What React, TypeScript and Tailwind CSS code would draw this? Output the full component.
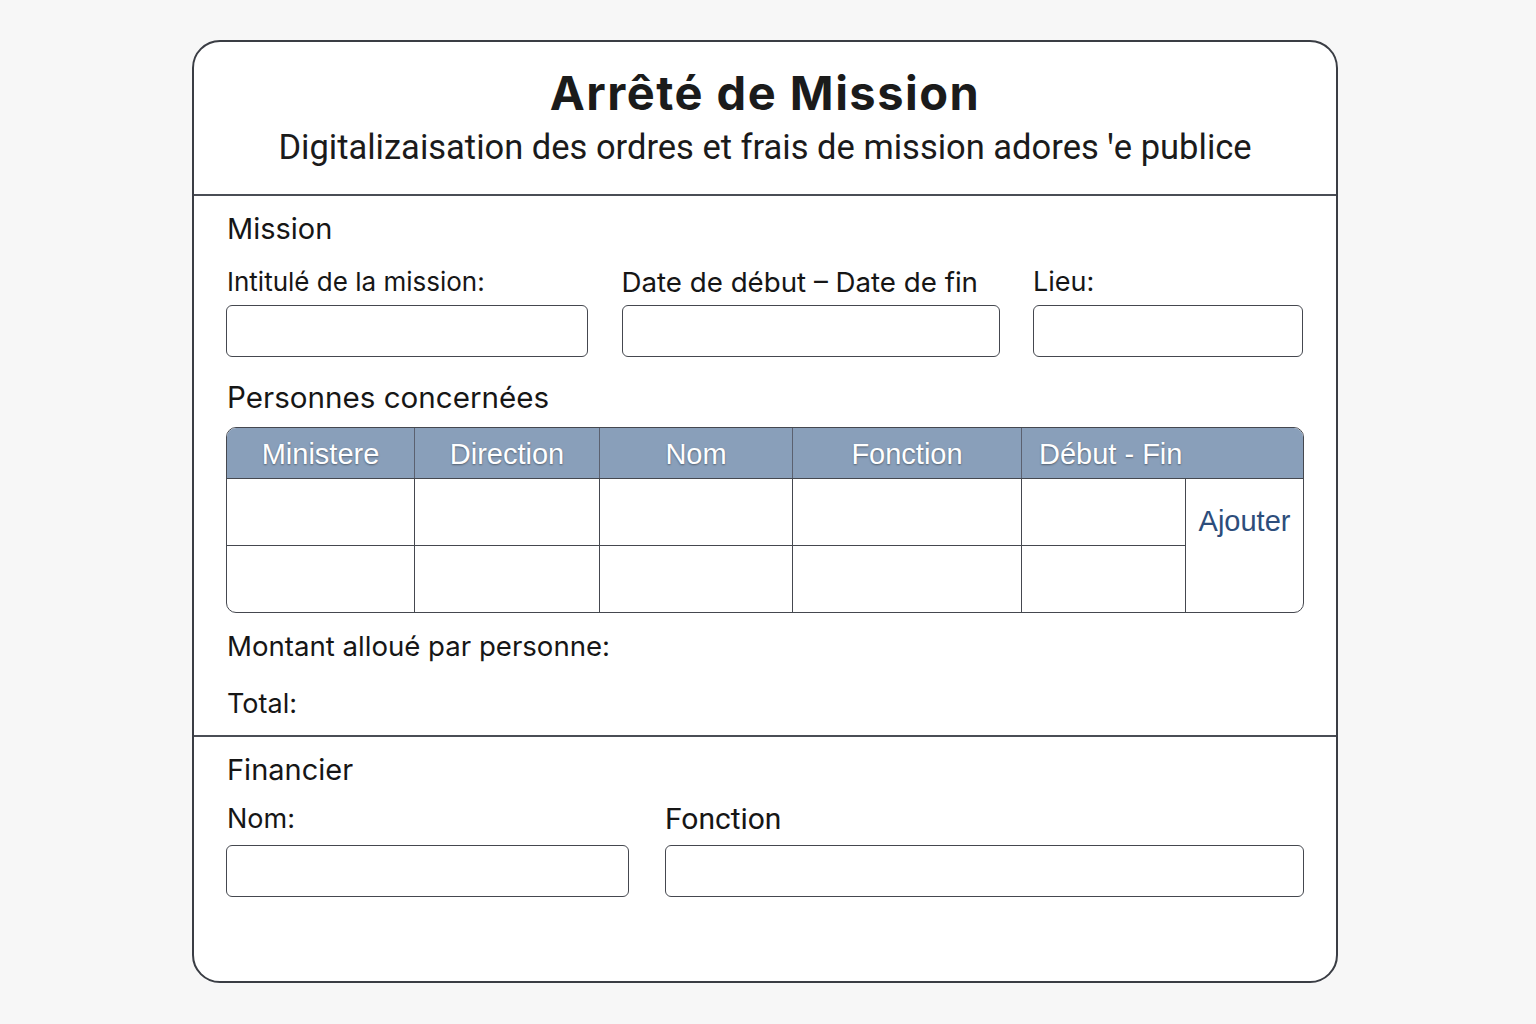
import React from "react";

const inter = "font-['Inter','Liberation_Sans',sans-serif]";

function Field({ className = "" }: { className?: string }) {
  return (
    <div
      className={`h-[52px] rounded-[6px] border-[1.5px] border-[#45484f] bg-white ${className}`}
    />
  );
}

export default function App() {
  const headers = ["Ministere", "Direction", "Nom", "Fonction"];
  return (
    <div className="min-h-screen w-full bg-[#f7f7f7] flex pl-[192px] pt-[40px]">
      <div className="w-[1146px] h-[943px] rounded-[28px] border-2 border-[#3a3d44] bg-white flex flex-col text-[#161616]">
        {/* Header */}
        <div className="h-[154px] border-b-2 border-[#4a4d55] flex flex-col items-center pt-[24px]">
          <h1 className={`${inter} text-[47px] leading-[54px] font-bold text-[#1b1b1b] tracking-[1.5px]`}>
            Arrêté de Mission
          </h1>
          <p className="mt-[6px] font-['Roboto','Liberation_Sans',sans-serif] text-[34.5px] leading-[42px] text-[#1b1b1b]">
            Digitalizaisation des ordres et frais de mission adores ꞌe publice
          </p>
        </div>

        {/* Mission section */}
        <div className="px-[32px] pt-[15px] pb-[14px] border-b-2 border-[#4a4d55]">
          <div className={`${inter} text-[29px] leading-[36px] pl-[1px]`}>Mission</div>

          <div className="mt-[20px] grid grid-cols-[362px_378px_270px] gap-x-[33.5px]">
            <div className={`${inter} text-[26px] leading-[30px] pl-[1px]`}>Intitulé de la mission:</div>
            <div className={`${inter} text-[27.7px] leading-[30px]`}>Date de début – Date de fin</div>
            <div className={`${inter} text-[27px] leading-[30px]`}>Lieu:</div>
            <Field className="mt-[8px]" />
            <Field className="mt-[8px]" />
            <Field className="mt-[8px]" />
          </div>

          <div className={`${inter} mt-[22px] text-[29.6px] leading-[36px] pl-[1px]`}>
            Personnes concernées
          </div>

          {/* Table */}
          <div className="mt-[12px] rounded-[10px] border-[1.5px] border-[#45484f] overflow-hidden">
            <div className="grid grid-cols-[188px_185px_193px_229px_164px_1fr] h-[51px] bg-[#899fba] border-b-[1.5px] border-[#45484f] font-['Liberation_Sans',Arial,sans-serif] text-[29px] text-white [text-shadow:0_1px_2px_rgba(0,0,0,0.4)]">
              {headers.map((h) => (
                <div
                  key={h}
                  className="flex items-center justify-center pt-[4px] border-r-[1.5px] border-[#5b6170]"
                >
                  {h}
                </div>
              ))}
              <div className="col-span-2 flex items-center pt-[4px] pl-[17px]">Début - Fin</div>
            </div>
            <div className="grid grid-cols-[188px_185px_193px_229px_164px_1fr] grid-rows-[67px_66px]">
              {[0, 1, 2, 3, 4].map((i) => (
                <div key={"a" + i} className="border-r-[1.5px] border-b-[1.5px] border-[#45484f]" />
              ))}
              <div className="row-span-2 flex justify-center pt-[25px] font-['Liberation_Sans',Arial,sans-serif] text-[29px] leading-[34px] text-[#2d4d7b]">
                Ajouter
              </div>
              {[0, 1, 2, 3, 4].map((i) => (
                <div key={"b" + i} className="border-r-[1.5px] border-[#45484f]" />
              ))}
            </div>
          </div>

          <div className={`${inter} mt-[16px] text-[27.6px] leading-[34px] pl-[1px]`}>
            Montant alloué par personne:
          </div>
          <div className={`${inter} mt-[24px] text-[27px] leading-[34px] pl-[1px]`}>Total:</div>
        </div>

        {/* Financier section */}
        <div className="px-[32px] pt-[15px]">
          <div className={`${inter} text-[29px] leading-[36px] pl-[1px]`}>Financier</div>
          <div className="mt-[16px] grid grid-cols-[403px_1fr] gap-x-[36px]">
            <div className={`${inter} text-[27px] leading-[30px] pl-[1px]`}>Nom:</div>
            <div className="font-['Roboto','Liberation_Sans',sans-serif] text-[30px] leading-[30px]">Fonction</div>
            <Field className="mt-[11px]" />
            <Field className="mt-[11px]" />
          </div>
        </div>
      </div>
    </div>
  );
}
